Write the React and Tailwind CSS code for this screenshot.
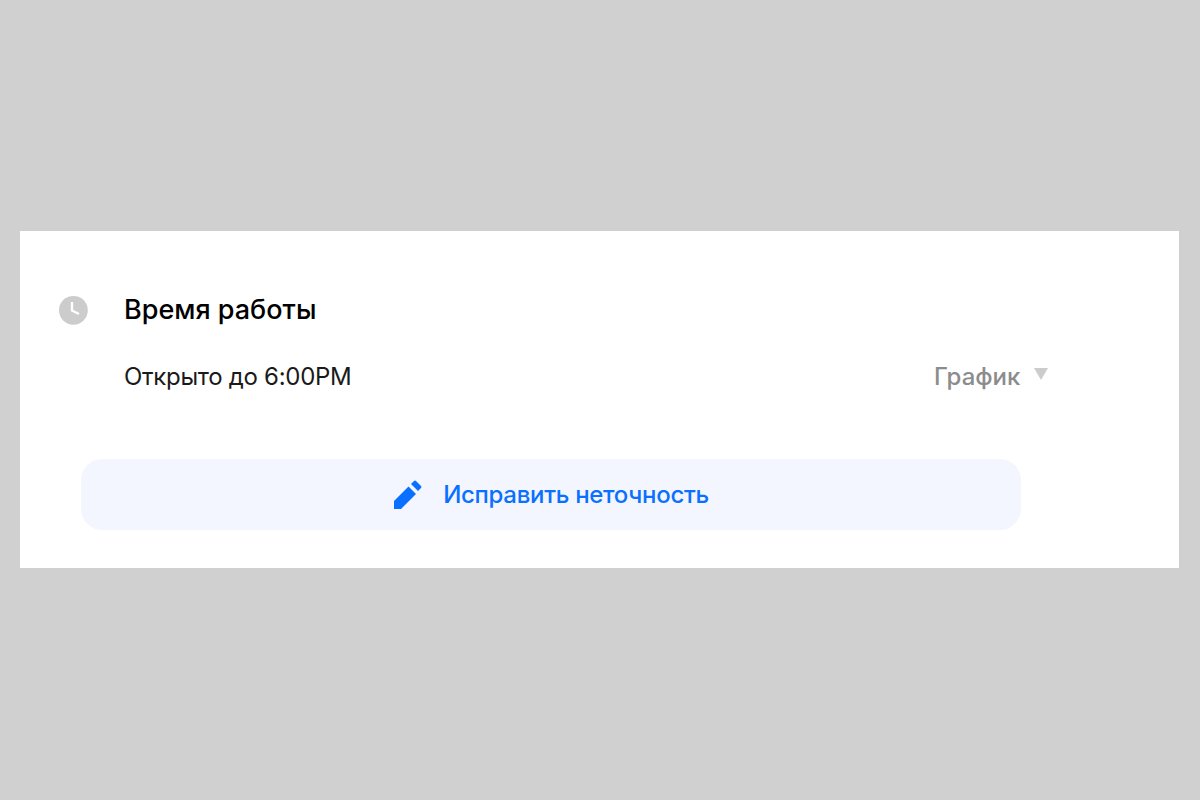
const App = () => {
  return (
    <div className="flex h-[800px] w-[1200px] items-start bg-[#d0d0d0] pl-5 pt-[231px] font-['Inter',sans-serif]">
      <div className="h-[337px] w-[1159px] bg-white pl-[39px] pt-[64px]">
        <div className="flex h-[30px] items-center">
          <svg className="h-[30px] w-[30px]" viewBox="0 0 30 30">
            <circle cx="14.4" cy="15.3" r="14.4" fill="#cccccc" />
            <path d="M13 7V15.5L20 19" fill="none" stroke="#fff" strokeWidth="2.4" />
          </svg>
          <h2 className="ml-[35px] text-[27px] font-medium text-black">Время работы</h2>
        </div>
        <div className="mt-[30px] flex h-[44px] items-center pl-[65px]">
          <p className="w-[227px] text-[24px] tracking-[-0.3px] whitespace-nowrap text-[#1a1a1a]">Открыто до 6:00PM</p>
          <div className="ml-[583px] flex items-center">
            <span className="text-[24px] font-medium text-[#8c8c8c]">График</span>
            <svg className="mb-[6px] ml-[14px] h-[12px] w-[14px]" viewBox="0 0 14 12">
              <path d="M0 0H14L7 12Z" fill="#cccccc" />
            </svg>
          </div>
        </div>
        <button className="ml-[22px] mt-[60px] flex h-[71px] w-[940px] items-center justify-center rounded-[21px] bg-[#f3f6fe]">
          <svg className="h-[29px] w-[29px]" viewBox="0 0 29 29">
            <path d="M1 29V21L15.5 6.5L23 14L8 29Z" fill="#0a70ff" />
            <path d="M18 4L21 1Q22 0 23 1L28 6Q29 7 28 8L25 11Z" fill="#0a70ff" />
          </svg>
          <span className="ml-[21px] text-[24px] font-medium tracking-[-0.3px] text-[#0a70ff]">Исправить неточность</span>
        </button>
      </div>
    </div>
  );
};

export default App;
